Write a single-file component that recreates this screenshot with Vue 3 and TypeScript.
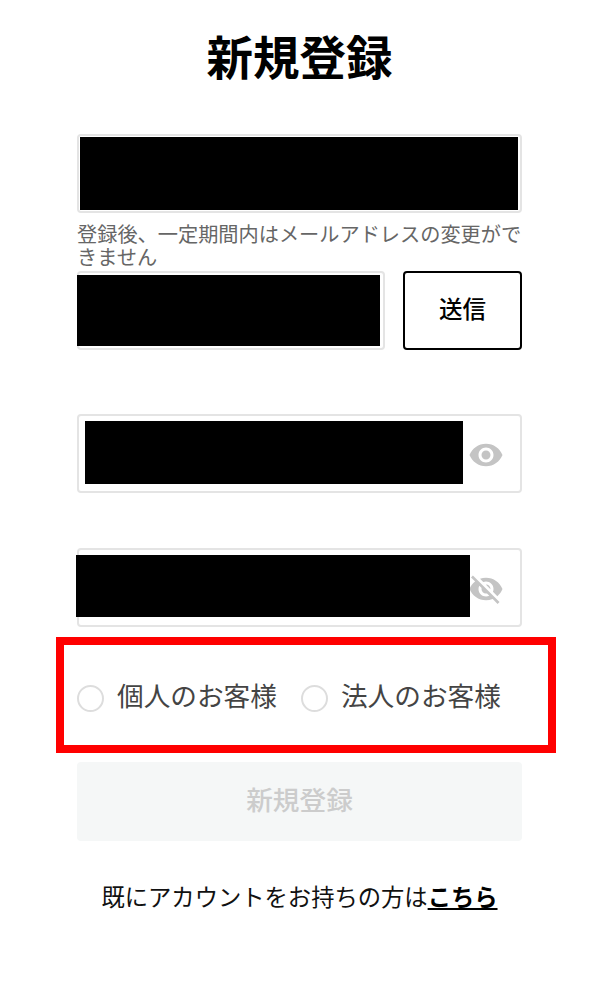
<script setup lang="ts">
const eyeOn = 'M12 4.5C7 4.5 2.73 7.61 1 12c1.73 4.39 6 7.5 11 7.5s9.27-3.11 11-7.5c-1.73-4.39-6-7.5-11-7.5zM12 17c-2.76 0-5-2.24-5-5s2.24-5 5-5 5 2.24 5 5-2.24 5-5 5zm0-8c-1.66 0-3 1.34-3 3s1.34 3 3 3 3-1.34 3-3-1.34-3-3-3z'
const eyeOff = 'M12 7c2.76 0 5 2.24 5 5 0 .65-.13 1.26-.36 1.83l2.92 2.92c1.51-1.26 2.7-2.89 3.43-4.75-1.73-4.39-6-7.5-11-7.5-1.4 0-2.74.25-3.98.7l2.16 2.16C10.74 7.13 11.35 7 12 7zM2 4.27l2.28 2.28.46.46C3.08 8.3 1.78 10.02 1 12c1.73 4.39 6 7.5 11 7.5 1.55 0 3.03-.3 4.38-.84l.42.42L19.73 22 21 20.73 3.27 3 2 4.27zM7.53 9.8l1.55 1.55c-.05.21-.08.43-.08.65 0 1.66 1.34 3 3 3 .22 0 .44-.03.65-.08l1.55 1.55c-.67.33-1.41.53-2.2.53-2.76 0-5-2.24-5-5 0-.79.2-1.53.53-2.2zm4.31-.78l3.15 3.15.02-.16c0-1.66-1.34-3-3-3l-.17.01z'
const options: string[] = ['個人のお客様', '法人のお客様']
</script>

<template>
  <main class="page">
    <h1 class="title">新規登録</h1>

    <div class="field email"><div class="mask"></div></div>
    <p class="note">登録後、一定期間内はメールアドレスの変更ができません</p>

    <div class="code-row">
      <div class="field code"><div class="mask"></div></div>
      <button class="send" type="button">送信</button>
    </div>

    <div class="field password first">
      <div class="mask"></div>
      <svg class="eye" viewBox="0 0 24 24"><path :d="eyeOn" /></svg>
    </div>

    <div class="field password second">
      <div class="mask"></div>
      <svg class="eye" viewBox="0 0 24 24"><path :d="eyeOff" /></svg>
    </div>

    <div class="radios">
      <label v-for="option in options" :key="option" class="radio">
        <span class="dot"></span>
        <span class="radio-text">{{ option }}</span>
      </label>
      <div class="highlight"></div>
    </div>

    <button class="submit" type="button" disabled>新規登録</button>

    <p class="login">既にアカウントをお持ちの方は<a class="link">こちら</a></p>
  </main>
</template>

<style>
html, body { margin: 0; background: #fff; }
</style>

<style scoped>
.page {
  box-sizing: border-box;
  width: 600px;
  height: 1000px;
  padding: 25px 78px 0 77px;
  font-family: "Noto Sans CJK JP", "Noto Sans", sans-serif;
  color: #000;
  background: #fff;
  overflow: hidden;
}
.title {
  margin: 0;
  font-size: 46.5px;
  line-height: 60px;
  font-weight: 700;
  text-align: center;
}
.field {
  box-sizing: border-box;
  height: 79px;
  border: 2px solid #e4e4e4;
  border-radius: 4px;
  display: flex;
  align-items: center;
  background: #fff;
}
.mask { background: #000; position: relative; z-index: 1; flex: none; }
.email { margin-top: 49px; }
.email .mask { width: 438px; height: 73px; margin-left: 1px; }
.note {
  margin: 9px 0 3px;
  font-size: 20.2px;
  line-height: 23px;
  color: #666;
}
.code-row {
  display: flex;
  justify-content: space-between;
}
.code { width: 308px; }
.code .mask { width: 303px; height: 71px; margin-left: -2px; }
.send {
  box-sizing: border-box;
  width: 119px;
  height: 79px;
  padding: 0 0 5px;
  border: 2px solid #000;
  border-radius: 4px;
  background: #fff;
  color: #000;
  font-family: inherit;
  font-size: 23.5px;
  font-weight: 500;
}
.first { margin-top: 64px; }
.first .mask { width: 378px; height: 63px; margin: 0 0 2px 6px; }
.second { margin-top: 55px; }
.second .mask { width: 394px; height: 62px; margin: 0 0 3px -3px; }
.eye { width: 36px; height: 36px; margin-top: 2px; flex: none; fill: #c4c4c4; }
.first .eye { margin-left: 5px; }
.second .eye { margin-left: -2px; }
.radios {
  position: relative;
  margin-top: 51px;
  height: 40px;
  display: flex;
  align-items: center;
  gap: 24px;
}
.radio {
  display: flex;
  align-items: center;
  gap: 13px;
  font-size: 26.67px;
  line-height: 40px;
  color: #444;
}
.radio-text { margin-bottom: 6px; }
.dot {
  box-sizing: border-box;
  width: 27px;
  height: 27px;
  border: 2px solid #ddd;
  border-radius: 50%;
  background: #fff;
  flex: none;
}
.highlight {
  position: absolute;
  left: -21px;
  top: -41px;
  width: 500px;
  height: 116px;
  box-sizing: border-box;
  border: 8px solid #f00;
  pointer-events: none;
}
.submit {
  display: block;
  width: 445px;
  height: 79px;
  margin-top: 44px;
  padding: 0 0 6px;
  border: none;
  border-radius: 4px;
  background: #f5f7f7;
  color: #ccc;
  font-family: inherit;
  font-size: 26.67px;
  font-weight: 500;
}
.login {
  margin: 39px 0 0;
  font-size: 23.3px;
  line-height: 32px;
  text-align: center;
  color: #111;
  white-space: nowrap;
}
.link {
  font-weight: 700;
  color: #000;
  text-decoration: underline;
}
</style>
